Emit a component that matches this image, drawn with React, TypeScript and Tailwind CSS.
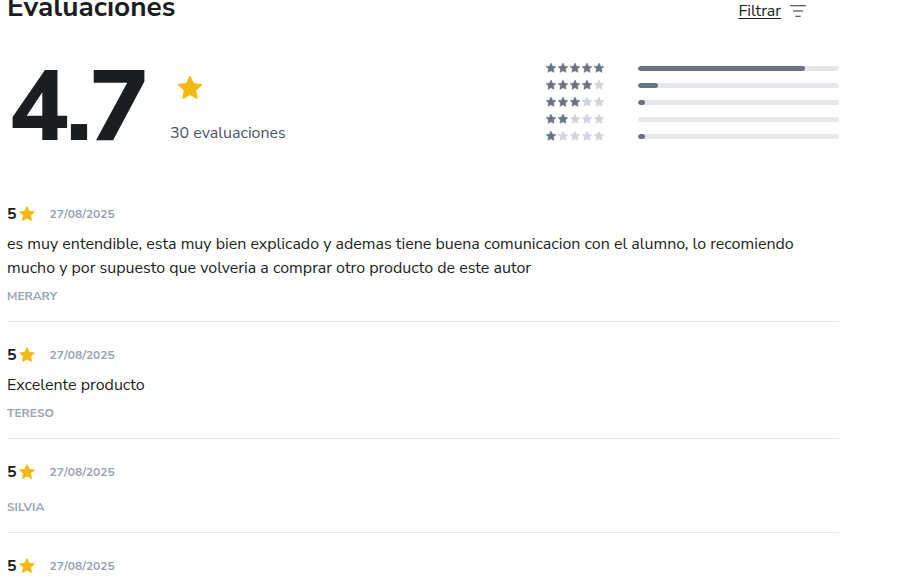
import { ListFilter } from 'lucide-react';

const font = { fontFamily: '"Nunito Sans", Lato, "Noto Sans", sans-serif' };

function Star({ className }: { className?: string }) {
  return (
    <svg viewBox="0 0 24 24" className={className} fill="currentColor">
      <path d="M12 2.2l2.95 6.2 6.8.85-4.98 4.7 1.27 6.75L12 17.4l-6.04 3.3 1.27-6.75-4.98-4.7 6.8-.85z" strokeLinejoin="round" stroke="currentColor" strokeWidth="1.2" />
    </svg>
  );
}

const dist = [
  { stars: 5, pct: 83 },
  { stars: 4, pct: 10 },
  { stars: 3, pct: 3.3 },
  { stars: 2, pct: 0 },
  { stars: 1, pct: 3.3 },
];

const reviews = [
  {
    name: 'MERARY',
    text: 'es muy entendible, esta muy bien explicado y ademas tiene buena comunicacion con el alumno, lo recomiendo mucho y por supuesto que volveria a comprar otro producto de este autor',
  },
  { name: 'TERESO', text: 'Excelente producto' },
  { name: 'SILVIA', text: '' },
  { name: '', text: '' },
];

export default function App() {
  return (
    <div className="bg-white min-h-[587px] overflow-hidden text-[#1b1e21]" style={font}>
      <div className="w-[832px] ml-[7px] -mt-[11px]">
        <div className="flex items-center justify-between">
          <h2 className="text-[28px] font-bold leading-[36px]">Evaluaciones</h2>
          <button className="flex items-center gap-2 mr-[32px] mt-[8px] text-[16px]">
            <span className="underline underline-offset-2">Filtrar</span>
            <ListFilter className="w-[18px] h-[18px] text-[#1b1e21]" strokeWidth={1.25} />
          </button>
        </div>

        <div className="flex justify-between mt-[26px]">
          <div className="flex">
            <div className="text-[100px] font-extrabold leading-none tracking-[-0.03em] pl-[2px] mt-[6px]">4.7</div>
            <div className="flex flex-col ml-[24px] pt-[23px]">
              <Star className="w-[28px] h-[28px] text-[#f2b90f] ml-[6px]" />
              <span className="text-[16px] text-[#4b5563] mt-[19px]">30 evaluaciones</span>
            </div>
          </div>
          <div className="w-[293px] flex flex-col gap-[5px] pt-[11px]">
            {dist.map((d) => (
              <div key={d.stars} className="flex items-center h-[12px]">
                <div className="flex w-[93px] gap-0 -ml-[1px]">
                  {[1, 2, 3, 4, 5].map((i) => (
                    <Star key={i} className={`w-[12px] h-[12px] ${i <= d.stars ? 'text-[#6b7280]' : 'text-[#d1d5db]'}`} />
                  ))}
                </div>
                <div className="flex-1 h-[5px] rounded-full bg-[#e5e7eb] overflow-hidden">
                  <div
                    className="h-full rounded-full bg-[#6b7280]"
                    style={{ width: d.pct ? `max(${d.pct}%, 5px)` : 0 }}
                  />
                </div>
              </div>
            ))}
          </div>
        </div>

        <div className="mt-[47px]">
          {reviews.map((r, i) => (
            <div key={i} className={`pb-[17px] ${i > 0 ? 'pt-[23px]' : ''} border-b border-[#e5e7eb]`}>
              <div className="flex items-center h-[20px]">
                <span className="text-[16px] font-bold">5</span>
                <Star className="w-[18px] h-[18px] text-[#f2b90f] ml-[1px]" />
                <span className="ml-[14px] text-[12px] font-bold text-[#9ca3af]">27/08/2025</span>
              </div>
              {r.text ? (
                <p className="text-[16px] leading-[24px] mt-[8px] pr-[40px]">{r.text}</p>
              ) : (
                <div className="h-[9px]" />
              )}
              {r.name && (
                <div className="text-[12px] font-bold text-[#9ca3af] mt-[8px] leading-[16px]">{r.name}</div>
              )}
            </div>
          ))}
        </div>
      </div>
    </div>
  );
}
